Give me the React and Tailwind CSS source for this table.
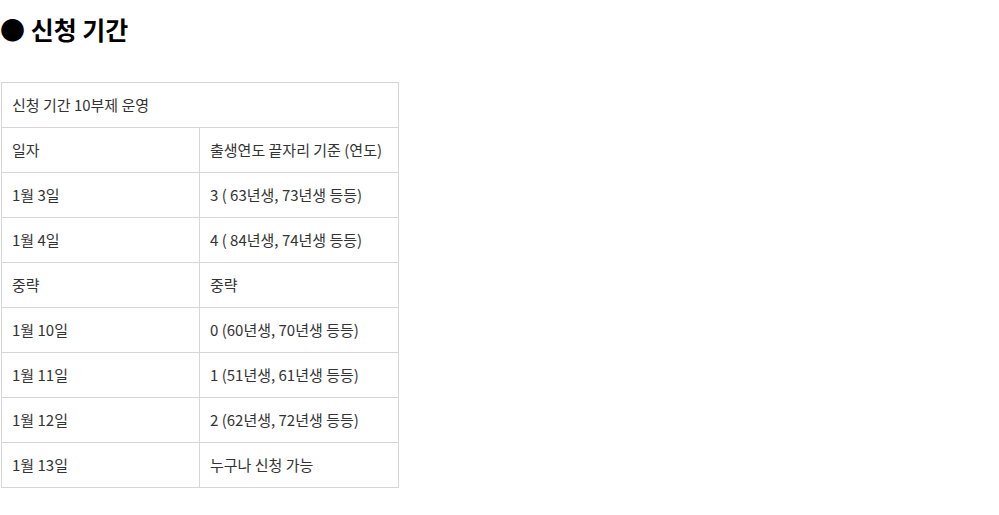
import React from 'react';

const ROWS = [
  ['일자', '출생연도 끝자리 기준 (연도)'],
  ['1월 3일', '3 ( 63년생, 73년생 등등)'],
  ['1월 4일', '4 ( 84년생, 74년생 등등)'],
  ['중략', '중략'],
  ['1월 10일', '0 (60년생, 70년생 등등)'],
  ['1월 11일', '1 (51년생, 61년생 등등)'],
  ['1월 12일', '2 (62년생, 72년생 등등)'],
  ['1월 13일', '누구나 신청 가능'],
];

export default function App() {
  return (
    <div className="min-h-screen bg-white text-[#333] [font-family:'Noto_Sans_CJK_KR','Noto_Sans',sans-serif]">
      <h2 className="pt-[11px] text-[25px] font-bold leading-[36px] text-black">● 신청 기간</h2>
      <table className="ml-px mt-[35px] w-[398px] border-collapse text-[15px]">
        <tbody>
          <tr>
            <td colSpan={2} className="h-[45px] border border-[#d6d6d6] px-[10px] align-middle">신청 기간 10부제 운영</td>
          </tr>
          {ROWS.map((r, i) => (
            <tr key={i}>
              <td className="h-[45px] w-[198px] border border-[#d6d6d6] px-[10px] align-middle">{r[0]}</td>
              <td className="h-[45px] border border-[#d6d6d6] px-[10px] align-middle">{r[1]}</td>
            </tr>
          ))}
        </tbody>
      </table>
    </div>
  );
}
